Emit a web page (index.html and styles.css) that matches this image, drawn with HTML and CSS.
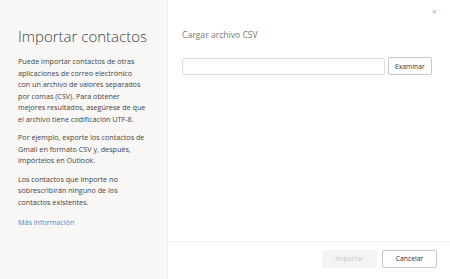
FILE: index.html
```html
<!DOCTYPE html>
<html lang="es">
    <head>
        <meta charset="utf-8" />
        <title>Importar contactos</title>
        <link rel="stylesheet" href="styles.css">
    </head>
    <body>
        <div class="dialog">
            <div class="side">
                <h1>Importar contactos</h1>
                <p>Puede importar contactos de otras aplicaciones de correo electrónico con un archivo de valores separados por comas (CSV). Para obtener mejores resultados, asegúrese de que el archivo tiene codificación UTF-8.</p>
                <p>Por ejemplo, exporte los contactos de Gmail en formato CSV y, después, impórtelos en Outlook.</p>
                <p>Los contactos que importe no sobrescribirán ninguno de los contactos existentes.</p>
                <a href="#" class="more">Más información</a>
            </div>
            <div class="main">
                <div class="top">
                    <span class="close">&#215;</span>
                </div>
                <div class="content">
                    <h2>Cargar archivo CSV</h2>
                    <div class="file-row">
                        <input type="text" class="file-name" />
                        <button class="btn">Examinar</button>
                    </div>
                </div>
                <div class="footer">
                    <button class="btn disabled">Importar</button>
                    <button class="btn">Cancelar</button>
                </div>
            </div>
        </div>
    </body>
</html>
```

FILE: styles.css
```css
* {
    padding: 0;
    margin: 0;
    box-sizing: border-box;
}
body {
    font-family: "Open Sans", "Liberation Sans", sans-serif;
    color: #333;
    background: #fff;
}
.dialog {
    display: flex;
    width: 450px;
    height: 279px;
}

.side {
    width: 168px;
    background-color: #f8f7f6;
    border-right: 1px solid #f0eeec;
    padding: 26px 21px 0 18px;
}

.side h1 {
    font-size: 15px;
    font-weight: 300;
    color: #444;
    line-height: 20px;
    margin-bottom: 10px;
    white-space: nowrap;
}

.side p {
    font-size: 7.2px;
    line-height: 11.5px;
    color: #444;
    margin-bottom: 7px;
}

.side .more {
    display: block;
    margin-top: 8.5px;
    font-size: 7.2px;
    line-height: 11.5px;
    color: #3b8ed4;
    text-decoration: none;
}

.main {
    flex: 1;
    display: flex;
    flex-direction: column;
}

.main .top {
    height: 28px;
    display: flex;
    justify-content: flex-end;
    padding: 6px 13px 0 0;
}

.main .close {
    font-size: 9px;
    color: #aaa;
    line-height: 12px;
}

.main .content {
    flex: 1;
    padding: 0 13px 0 14px;
}

.content h2 {
    font-size: 8.6px;
    font-weight: 400;
    color: #777;
    line-height: 14px;
    margin-bottom: 15px;
}

.file-row {
    display: flex;
    align-items: center;
}

.file-row .file-name {
    width: 203px;
    height: 17px;
    border: 1px solid #ddd;
    border-radius: 2px;
    margin-right: 3px;
}

.btn {
    font-family: "Open Sans", "Liberation Sans", sans-serif;
    font-size: 6.8px;
    color: #333;
    background: #fff;
    border: 1px solid #c8c8c8;
    border-radius: 2px;
    height: 18px;
    padding: 0 6px;
}

.footer {
    height: 38px;
    border-top: 1px solid #f0eeec;
    display: flex;
    justify-content: flex-end;
    align-items: center;
    padding: 0 13px 4px 0;
}

.footer .btn {
    width: 55px;
    height: 18px;
    margin-left: 5px;
}

.footer .btn.disabled {
    background: #f4f4f4;
    border-color: #f4f4f4;
    color: #c8c8c8;
}
```
